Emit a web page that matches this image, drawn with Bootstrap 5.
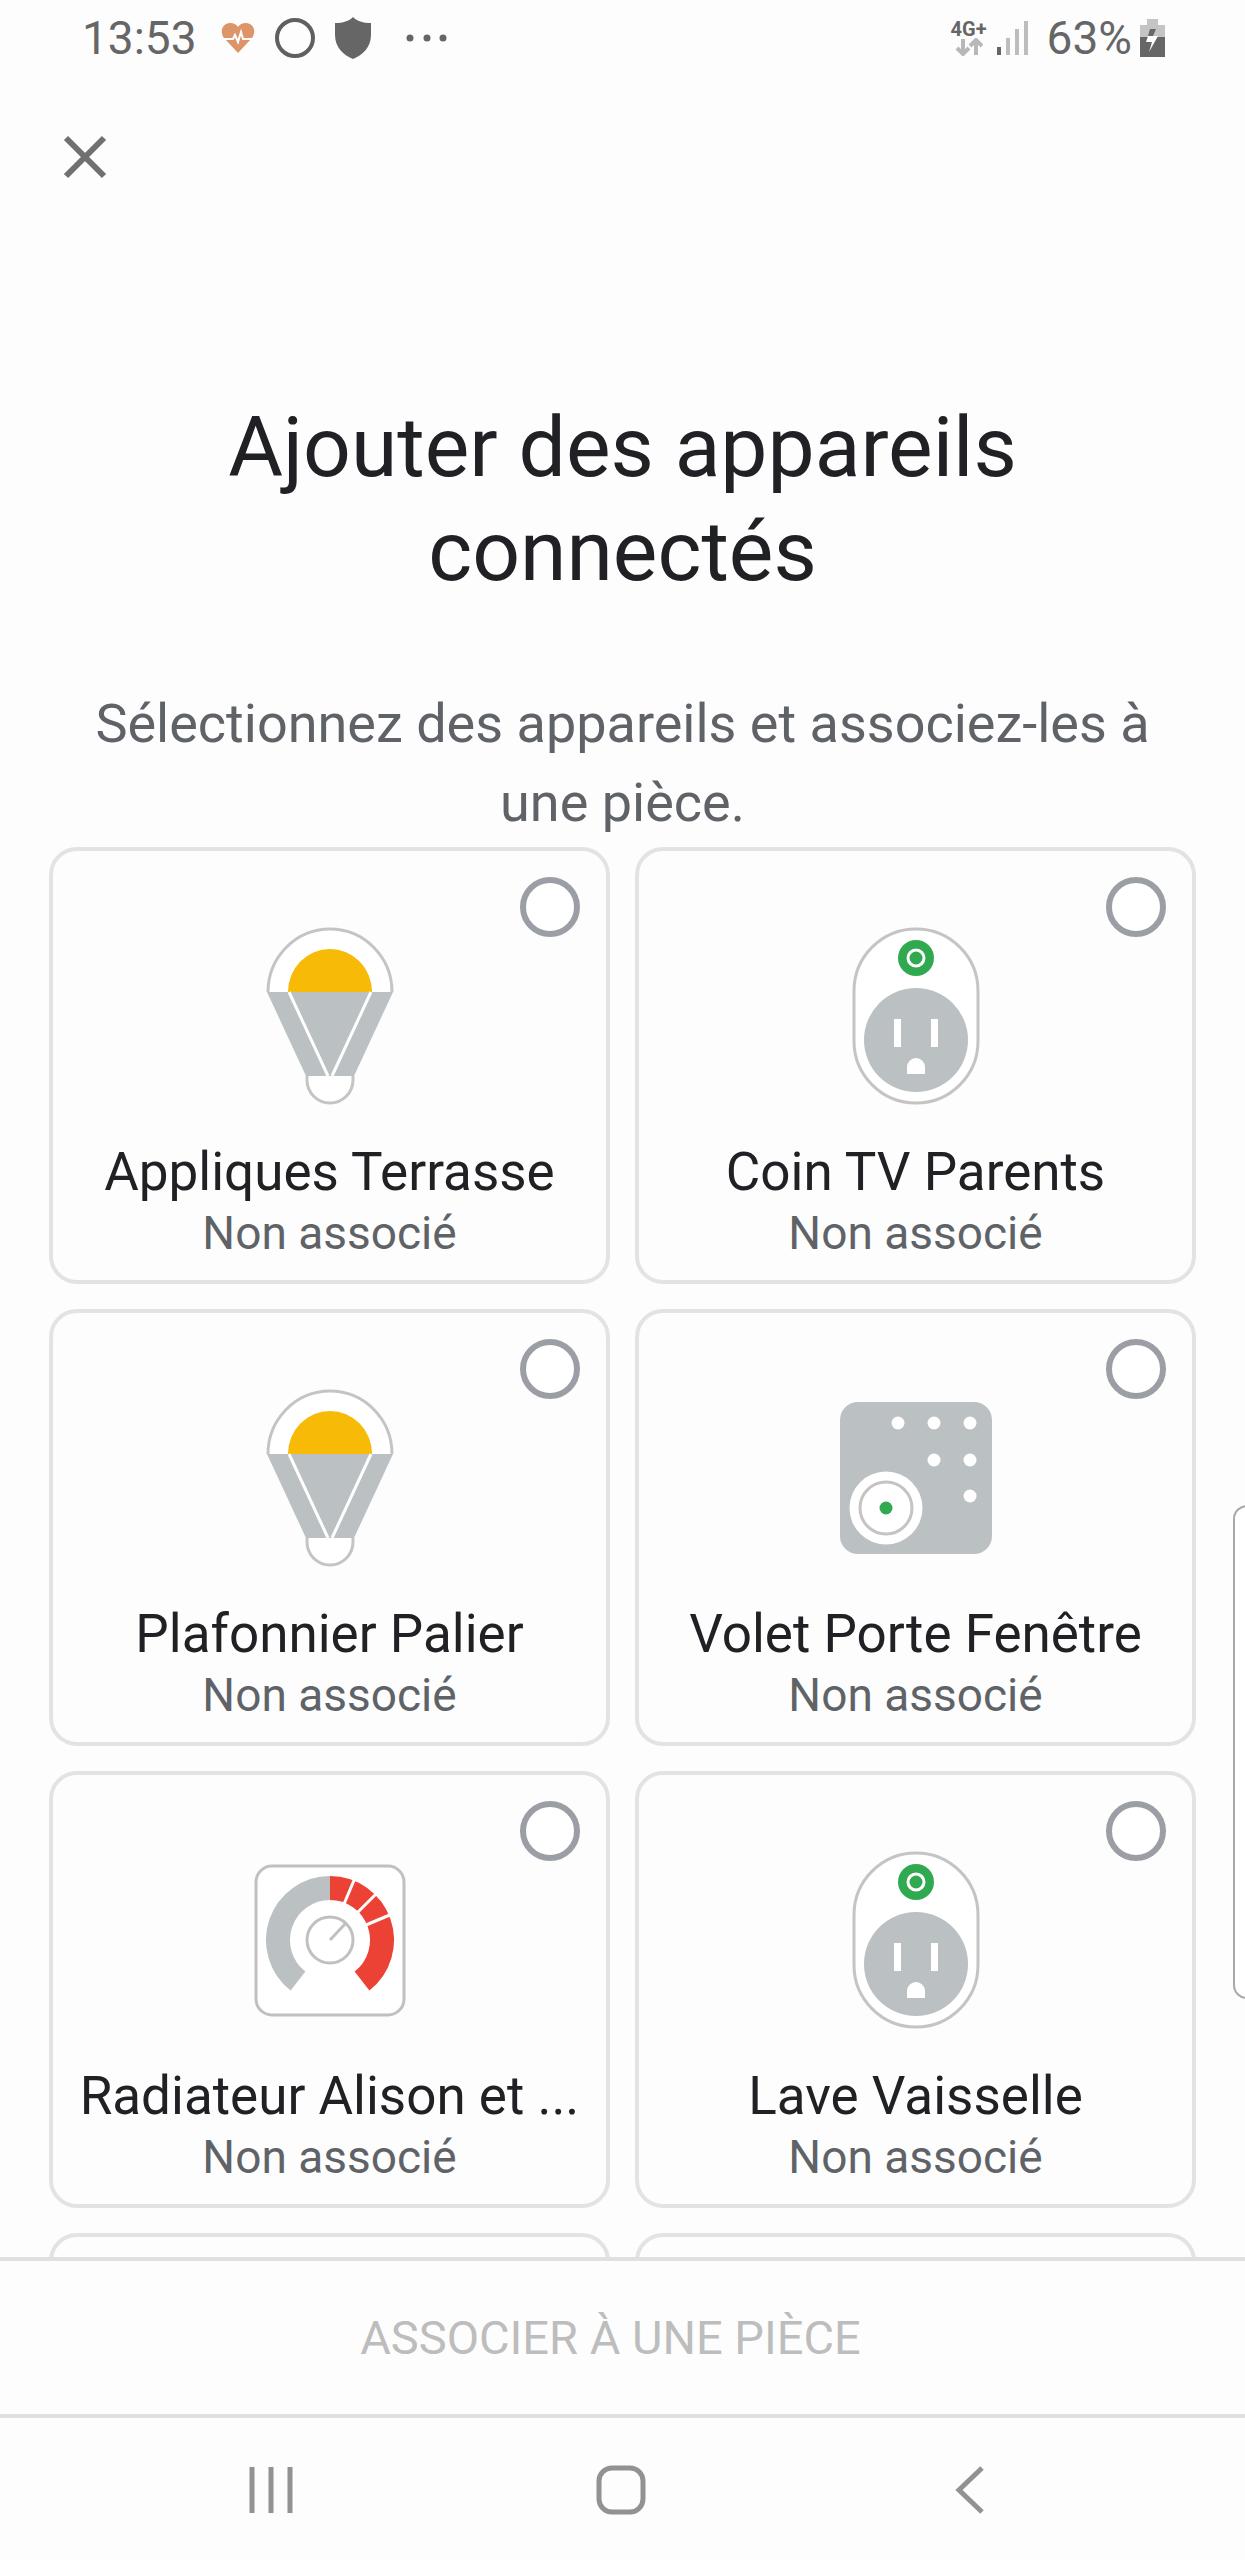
<!DOCTYPE html>
<html lang="fr">
<head>
<meta charset="utf-8">
<meta name="viewport" content="width=device-width, initial-scale=1">
<title>Ajouter des appareils connectés</title>
<link href="https://cdn.jsdelivr.net/npm/bootstrap@5.3.0/dist/css/bootstrap.min.css" rel="stylesheet">
<style>
  body { font-family: Roboto, "Liberation Sans", sans-serif; background: #fdfdfd; color: #202124; }
  svg { display: block; flex: none; }
  .status-bar { height: 76px; padding: 0 80px 0 82px; color: #666; font-size: 46px; line-height: 76px; }
  .status-icons { margin-left: 24px; gap: 20px; }
  .net-type { font-size: 20px; line-height: 18px; font-weight: 700; }
  .close-row { padding: 50px 54px 0; }
  .close-btn { width: 62px; height: 62px; color: #666; }
  .page-title { font-size: 84px; line-height: 104px; font-weight: 400; padding: 208px 160px 0; }
  .page-intro { font-size: 54px; line-height: 79px; color: #5f6368; padding: 80px 80px 0; }
  .device-list { padding: 5px 49px 0; }
  .device-row { --bs-gutter-x: 25px; --bs-gutter-y: 25px; }
  .device { min-height: 437px; border: 4px solid #e2e3e4; border-radius: 28px; padding: 76px 24px 0; background: #fdfdfd; }
  .device-name { font-size: 53px; line-height: 62px; margin-top: 36px; }
  .device-room { font-size: 46px; line-height: 60px; color: #5f6368; }
  .device .form-check-input { top: 26px; right: 26px; width: 60px; height: 60px; margin: 0; border: 6px solid #9b9ea4; background-color: #fff; }
  .action-bar { height: 157px; border-top: 4px solid #e0e0e0; padding-right: 24px; }
  .action-btn { font-size: 47px; line-height: 60px; color: #bdbdbd; }
  .action-btn:disabled { color: #bdbdbd; opacity: 1; }
  .nav-keys { height: 146px; border-top: 4px solid #e0e0e0; padding: 2px 100px 0 96px; color: #929292; }
  .nav-keys .btn { flex: 1 1 0; color: inherit; }
  .edge-panel { right: -20px; top: 1505px; width: 32px; height: 494px; border: 2px solid #a8a8a8; border-radius: 14px; background: #fff; }
</style>
</head>
<body class="vh-100 d-flex flex-column overflow-hidden position-relative">

<svg width="0" height="0" class="position-absolute" aria-hidden="true">
  <symbol id="bulb" viewBox="-80 0 160 178">
    <path d="M-62 65A62 63 0 0 1 62 65" fill="#fff" stroke="#c4c4c4" stroke-width="3"/>
    <path d="M-42 65A42 43 0 0 1 42 65Z" fill="#f7ba06"/>
    <path d="M-63 65H63L24 149H-24Z" fill="#bbc0c3"/>
    <path d="M-41 65L-2 149M41 65L2 149" stroke="#fff" stroke-width="3"/>
    <path d="M-23 149V153A23 23 0 0 0 23 153V149" fill="#fff" stroke="#c4c4c4" stroke-width="3"/>
  </symbol>
  <symbol id="outlet" viewBox="-80 0 160 178">
    <rect x="-62" y="2" width="124" height="174" rx="62" fill="#fff" stroke="#c4c4c4" stroke-width="3"/>
    <circle cy="31" r="18" fill="#31a950"/>
    <circle cy="31" r="8" fill="none" stroke="#fff" stroke-width="3"/>
    <circle cy="113" r="52" fill="#bbc0c3"/>
    <path d="M-22 92h7v28h-7zM15 92h7v28h-7zM-9 147v-7a9 9 0 0 1 18 0v7z" fill="#fff"/>
  </symbol>
  <symbol id="panel" viewBox="-80 0 160 178">
    <rect x="-76" y="13" width="152" height="152" rx="18" fill="#bbc0c3"/>
    <g fill="#fff"><circle cx="-18" cy="34" r="6.5"/><circle cx="18" cy="34" r="6.5"/><circle cx="54" cy="34" r="6.5"/><circle cx="18" cy="71" r="6.5"/><circle cx="54" cy="71" r="6.5"/><circle cx="54" cy="107" r="6.5"/><circle cx="-30" cy="119" r="36.5"/></g>
    <circle cx="-30" cy="119" r="26" fill="none" stroke="#c4c4c4" stroke-width="3"/>
    <circle cx="-30" cy="119" r="6.5" fill="#31a950"/>
  </symbol>
  <symbol id="heater" viewBox="-80 0 160 178">
    <rect x="-74" y="15" width="148" height="149" rx="16" fill="#fff" stroke="#c0c0c0" stroke-width="3"/>
    <g fill="none" transform="translate(0 89)">
      <path d="M-32 41A52 52 0 0 1 0 -52" stroke="#bbc0c3" stroke-width="24"/>
      <path d="M0 -52A52 52 0 0 1 32 41" stroke="#ec4236" stroke-width="24"/>
      <path d="M14 -36L25 -62M27 -27L47 -47M36 -15L62 -26" stroke="#fff" stroke-width="3"/>
      <circle r="23" stroke="#c0c0c0" stroke-width="3"/>
      <path d="M0 0L16 -17" stroke="#c0c0c0" stroke-width="3"/>
    </g>
  </symbol>
</svg>

<header class="flex-shrink-0">
  <div class="status-bar d-flex align-items-center">
    <span>13:53</span>
    <div class="status-icons d-flex align-items-center">
      <svg width="34" height="32" viewBox="0 0 34 32"><path d="M17 31L3 16C-2 9 2 1 9 1C13 1 16 3 17 5C18 3 21 1 25 1C32 1 36 9 31 16Z" fill="#dd9468"/><path d="M1 17H12L14 13L17 20L20 10L22 17H33" fill="none" stroke="#fff" stroke-width="2"/></svg>
      <svg width="40" height="40" viewBox="0 0 40 40"><circle cx="20" cy="20" r="18" fill="none" stroke="#606060" stroke-width="4"/></svg>
      <svg width="36" height="42" viewBox="0 0 36 42"><path d="M18 0C22 4 28 6 36 6V18C36 30 28 38 18 42C8 38 0 30 0 18V6C8 6 14 4 18 0Z" fill="#666"/></svg>
      <svg width="58" height="10" viewBox="0 0 58 10" fill="#666"><circle cx="19" cy="5" r="3.5"/><circle cx="36" cy="5" r="3.5"/><circle cx="52" cy="5" r="3.5"/></svg>
    </div>
    <div class="d-flex align-items-center ms-auto">
      <div class="d-flex flex-column align-items-center">
        <span class="net-type">4G+</span>
        <svg width="28" height="18" viewBox="0 0 28 18"><path d="M8 1V15M2 10L8 16L14 10M21 17V3M15 8L21 2L27 8" fill="none" stroke="#b8b8b8" stroke-width="4"/></svg>
      </div>
      <svg class="ms-2 me-3" width="36" height="34" viewBox="0 0 36 34"><path d="M2 26h4v8H2z" fill="#666"/><path d="M11 17h4v17h-4zM20 8h4v26h-4zM29 0h4v34h-4z" fill="#bdbdbd"/></svg>
      <span>63%</span>
      <svg class="ms-2" width="25" height="38" viewBox="0 0 25 38"><path d="M7 0H18V6H25V18H0V6H7Z" fill="#c4c4c4"/><path d="M0 18H25V38H0Z" fill="#666"/><path d="M10 10H16L13 17H8Z" fill="#666"/><path d="M8 17H18L9 33L12 23H6Z" fill="#fff"/></svg>
    </div>
  </div>
  <div class="close-row">
    <button type="button" class="close-btn btn p-0 border-0 d-flex align-items-center justify-content-center" aria-label="Fermer">
      <svg width="44" height="44" viewBox="0 0 44 44"><path d="M3 3L41 41M41 3L3 41" stroke="#707070" stroke-width="6" fill="none"/></svg>
    </button>
  </div>
</header>

<main class="flex-grow-1 overflow-hidden" style="min-height:0">
  <h1 class="page-title text-center m-0">Ajouter des appareils connectés</h1>
  <p class="page-intro text-center m-0">Sélectionnez des appareils et associez-les à une pièce.</p>
  <div class="device-list">
    <div class="row device-row">
      <div class="col-6"><label class="device d-block position-relative text-center w-100">
        <input class="form-check-input rounded-circle position-absolute" type="checkbox">
        <svg class="mx-auto" width="160" height="178"><use href="#bulb"/></svg>
        <span class="device-name d-block text-truncate">Appliques Terrasse</span><span class="device-room d-block">Non associé</span></label></div>
      <div class="col-6"><label class="device d-block position-relative text-center w-100">
        <input class="form-check-input rounded-circle position-absolute" type="checkbox">
        <svg class="mx-auto" width="160" height="178"><use href="#outlet"/></svg>
        <span class="device-name d-block text-truncate">Coin TV Parents</span><span class="device-room d-block">Non associé</span></label></div>
      <div class="col-6"><label class="device d-block position-relative text-center w-100">
        <input class="form-check-input rounded-circle position-absolute" type="checkbox">
        <svg class="mx-auto" width="160" height="178"><use href="#bulb"/></svg>
        <span class="device-name d-block text-truncate">Plafonnier Palier</span><span class="device-room d-block">Non associé</span></label></div>
      <div class="col-6"><label class="device d-block position-relative text-center w-100">
        <input class="form-check-input rounded-circle position-absolute" type="checkbox">
        <svg class="mx-auto" width="160" height="178"><use href="#panel"/></svg>
        <span class="device-name d-block text-truncate">Volet Porte Fenêtre</span><span class="device-room d-block">Non associé</span></label></div>
      <div class="col-6"><label class="device d-block position-relative text-center w-100">
        <input class="form-check-input rounded-circle position-absolute" type="checkbox">
        <svg class="mx-auto" width="160" height="178"><use href="#heater"/></svg>
        <span class="device-name d-block text-truncate">Radiateur Alison et ...</span><span class="device-room d-block">Non associé</span></label></div>
      <div class="col-6"><label class="device d-block position-relative text-center w-100">
        <input class="form-check-input rounded-circle position-absolute" type="checkbox">
        <svg class="mx-auto" width="160" height="178"><use href="#outlet"/></svg>
        <span class="device-name d-block text-truncate">Lave Vaisselle</span><span class="device-room d-block">Non associé</span></label></div>
      <div class="col-6"><div class="device"></div></div>
      <div class="col-6"><div class="device"></div></div>
    </div>
  </div>
</main>

<div class="action-bar flex-shrink-0 d-flex align-items-center justify-content-center">
  <button type="button" class="action-btn btn border-0" disabled>ASSOCIER À UNE PIÈCE</button>
</div>
<nav class="nav-keys flex-shrink-0 d-flex align-items-center" aria-label="Navigation">
  <button type="button" class="btn border-0 p-0" aria-label="Applications récentes"><svg class="mx-auto" width="46" height="48" viewBox="0 0 46 48"><path d="M4 1V47M23 1V47M42 1V47" stroke="currentColor" stroke-width="5"/></svg></button>
  <button type="button" class="btn border-0 p-0" aria-label="Accueil"><svg class="mx-auto" width="50" height="50" viewBox="0 0 50 50"><rect x="3" y="3" width="44" height="44" rx="13" fill="none" stroke="currentColor" stroke-width="5"/></svg></button>
  <button type="button" class="btn border-0 p-0" aria-label="Retour"><svg class="mx-auto" width="30" height="48" viewBox="0 0 30 48"><path d="M27 2L4 24L27 46" fill="none" stroke="currentColor" stroke-width="5"/></svg></button>
</nav>
<div class="edge-panel position-absolute"></div>

<script src="https://cdn.jsdelivr.net/npm/bootstrap@5.3.0/dist/js/bootstrap.bundle.min.js"></script>
</body>
</html>
